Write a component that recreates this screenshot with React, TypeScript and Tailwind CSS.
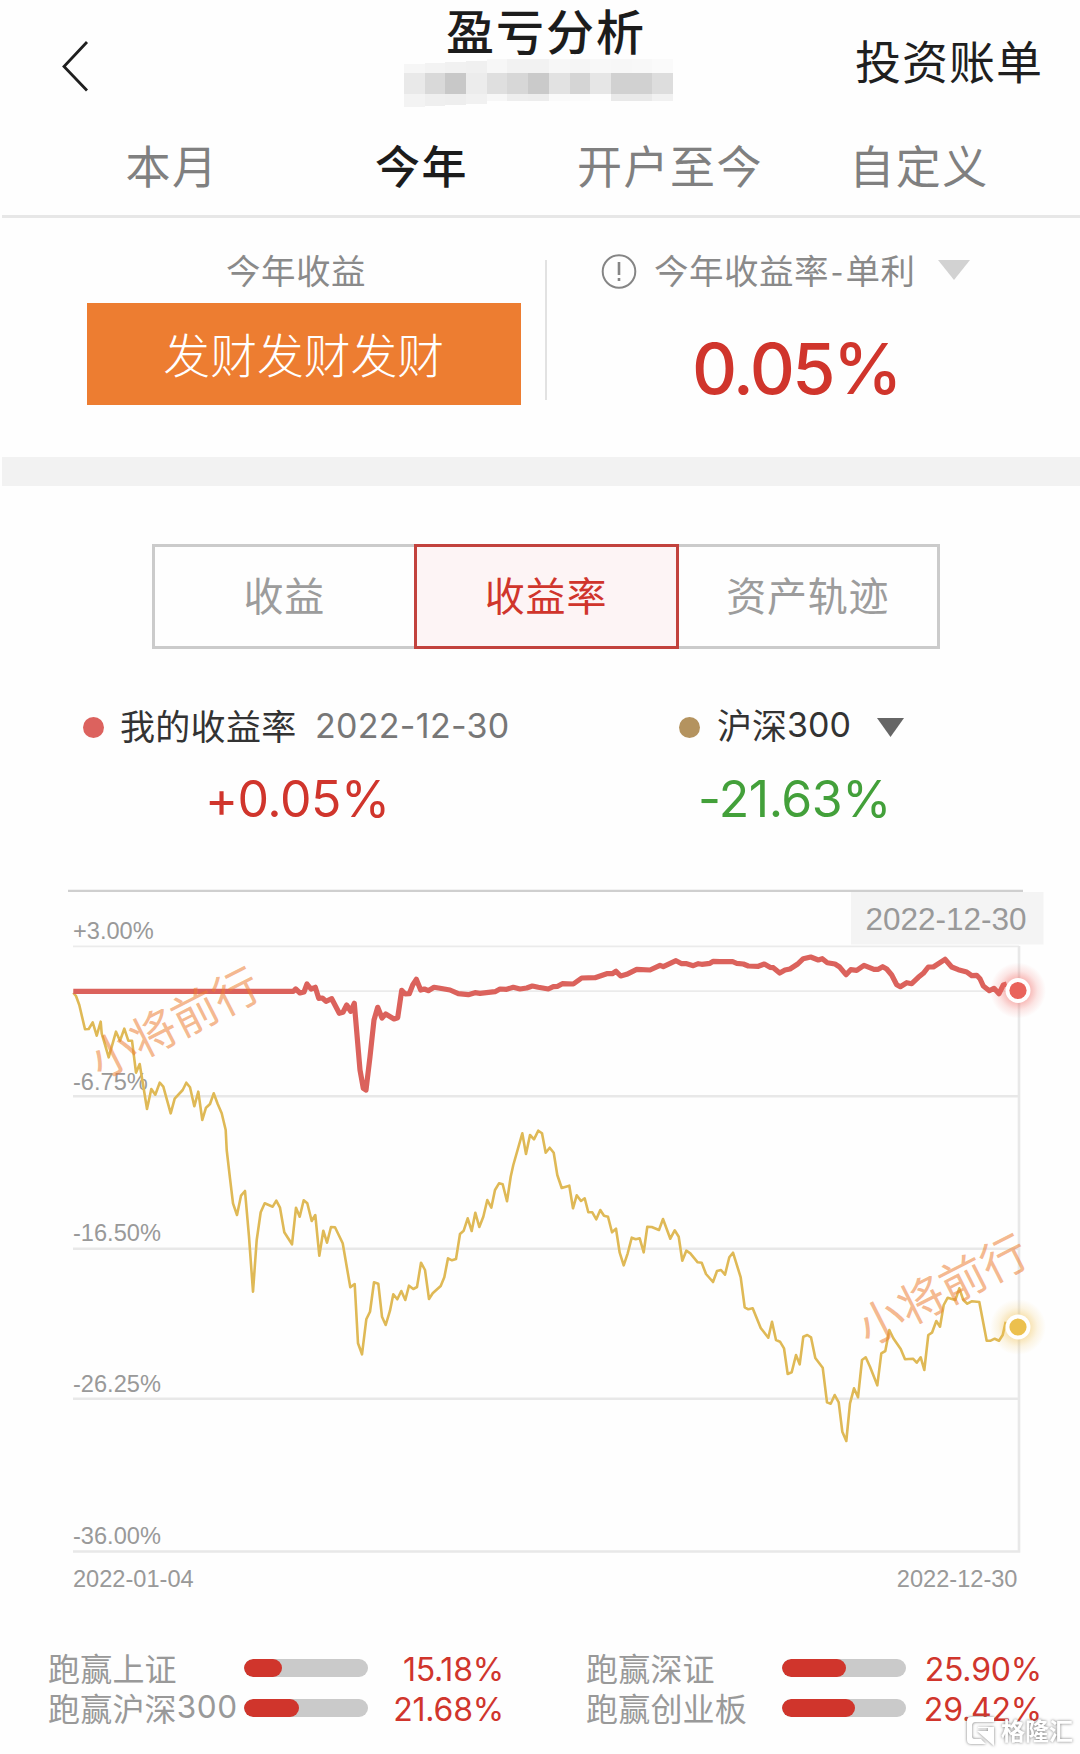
import React from "react";

type Segment = { ox: number; oy: number; pts: string };

// Each segment holds points in thirds of a pixel, relative to its own origin.
const toPoints = (segments: Segment[]) =>
  segments
    .flatMap(({ ox, oy, pts }) =>
      pts.split(" ").map((p) => {
        const [x, y] = p.split(",").map(Number);
        return `${(ox + x / 3).toFixed(1)},${(oy + y / 3).toFixed(1)}`;
      })
    )
    .join(" ");

const indexLine: Segment[] = [
  { ox: 50, oy: 870, pts: "70,368 78,378 88,405 105,478 116,477 128,457 140,497 152,455 155,490 176,562 198,485 210,512 223,476 235,512 246,512 258,608 269,582 291,717 304,657 316,674 329,638 340,650 362,730 374,686 398,660 409,638 420,652 433,709 445,665 457,750 468,713 480,702 491,670 503,702 515,730 527,780" },
  { ox: 50, oy: 1150, pts: "530,0 540,85 549,160 561,195 573,137 585,123 597,260 609,425 620,270 632,187 644,160 668,170 679,152 690,173 703,247 726,283 738,173 749,200 761,151 772,160 785,213 796,195 808,317 820,242 831,278 843,231 855,232 878,280 901,412 914,402 924,580 936,613 949,508 960,485 972,397 985,401 996,500" },
  { ox: 380, oy: 1150, pts: "17,525 30,482 40,433 52,448 64,423 76,450 87,407 100,417 111,411 123,338 135,360 147,447 158,430 182,408 193,382 204,325 216,331 228,327 240,252 251,242 263,205 275,243 286,188 298,231 310,200 322,150 334,173 345,120 357,100 368,103 381,154 392,80" },
  { ox: 380, oy: 870, pts: "400,885 427,790 438,852 450,795 462,808 475,782 486,790 497,848 509,833 521,848" },
  { ox: 380, oy: 1150, pts: "532,75 545,114 568,107 579,175 590,136 603,153 614,145 625,187 637,187 649,208 661,180 672,197 684,200 696,247 708,236 719,308 731,346 743,310 755,263 767,268 779,265 791,307 802,230 815,231 837,240 849,207 871,266 884,241 896,260 907,332 919,302 931,310 953,337 965,338 978,372 999,396 1011,363 1023,360 1035,374 1048,322" },
  { ox: 720, oy: 1150, pts: "39,308 62,382 74,472 85,478 98,475 122,534 145,563 156,515 168,570 180,575 192,595 203,672 215,667 228,615 239,643 250,560 262,555 273,562 286,624 308,653 321,757 332,761 344,735 356,757 367,845 379,873 390,760 402,715 414,742 426,630 437,622 450,650 472,706 484,610 496,603 508,540 520,565 542,597 555,628 579,626 590,638 602,622 613,660 625,555 636,548 649,513 660,530 671,465 683,443 706,450 718,415 730,450 742,461 755,454 778,456 800,572 812,572 824,566 837,572 848,555 857,515" },
];

const mineLine: Segment[] = [
  { ox: 50, oy: 870, pts: "70,364 730,364 737,357 750,369 762,366 771,342 783,357 796,352 806,385 817,384 828,394 845,386 868,430 879,427 890,405 902,424 913,400 930,600 940,655 948,660 960,560 972,450 983,412 996,444 1007,432 1032,447 1043,443" },
  { ox: 380, oy: 870, pts: "65,361 76,372 88,371 98,345 109,328 122,360 133,357 145,362 162,352 180,355 210,360 235,371 265,374 285,368 300,370 345,365 360,357 380,358 400,352 420,357 440,354 457,348 475,352 505,357 520,350 533,349 547,341 580,342 605,324 645,323 680,311 697,311 708,304 722,318 740,313 770,298 810,300 840,286 850,290 888,272 905,281 920,281 940,287 955,281 965,283 990,280 1000,274" },
  { ox: 720, oy: 870, pts: "0,275 38,275 50,280 70,282 85,288 115,289 133,282 150,292 160,293 179,309 195,300 210,297 232,283 250,266 272,261 295,270 307,266 322,278 345,282 358,290 378,314 392,299 410,301 432,286 462,298 475,298 488,290 500,297 515,315 530,344 541,350 560,338 575,341 595,322 610,310 625,291 640,291 675,268 695,291 715,299 740,306 755,317 770,316 780,326 790,348 808,362 822,355 837,371 850,345 860,342" },
];

const mosaic = ["#e9e9e9", "#d9d9d9", "#c8c8c8", "#ececec", "#dfdfdf", "#d7d7d7", "#cacaca", "#e2e2e2", "#d5d5d5", "#e6e6e6", "#d1d1d1", "#d1d1d1", "#dddddd"];
const mosaicTop = ["#f6f6f6", "#f3f3f3", "#f1f1f1", "#f0f0f0", "#f7f7f7", "#f2f2f2", "#f2f2f2", "#f7f7f7", "#f5f5f5", "#f8f8f8", "#f7f7f7", "#f8f8f8", "#fafafa"];
const mosaicBottom = ["#f3f3f3", "#efefef", "#eeeeee", "#f1f1f1", "#f7f7f7", "#eeeeee", "#ededed", "#fafafa", "#fbfbfb", "#fdfdfd", "#e9e9e9", "#e9e9e9", "#f1f1f1"];

function Header() {
  return (
    <header className="flex h-[110px] items-start">
      <svg className="mt-[38px] ml-[58px] h-[56px] w-[34px]" viewBox="0 0 34 56" fill="none" stroke="#1f1f1f" strokeWidth="2.8">
        <path d="M29 4 6 28.500 29 52.500" />
      </svg>
      <div className="ml-[312px] flex w-[269px] flex-col">
        <h1 className="ml-[42px] text-[48px] leading-[58px] font-medium tracking-[2px] whitespace-nowrap text-[#1c1c1c]">盈亏分析</h1>
        <div className="mt-[1px] flex items-end">
          {mosaicTop.map((c, i) => <i key={i} className="w-[20.700px]" style={{ background: c, height: i < 4 ? 9 + i : 14 }} />)}
        </div>
        <div className="flex">
          {mosaic.map((c, i) => <i key={i} className="h-[21px] w-[20.700px]" style={{ background: c }} />)}
        </div>
        <div className="flex items-start">
          {mosaicBottom.map((c, i) => <i key={i} className="w-[20.700px]" style={{ background: c, height: i < 4 ? 13 - i : 7 }} />)}
        </div>
      </div>
      <span className="mt-[35px] ml-[182px] text-[46px] leading-[48px] tracking-[1px] whitespace-nowrap text-[#1f1f1f]">投资账单</span>
    </header>
  );
}

function Tabs() {
  return (
    <nav className="ml-[2px] flex h-[108px] border-b-[3px] border-[#e7e7e7] pt-[30px] pl-[44px] text-center text-[45px] leading-[50px] tracking-[1.500px] whitespace-nowrap text-[#808080]">
      <span className="w-[252px]">本月</span>
      <span className="w-[247px] font-medium text-[#1c1c1c]">今年</span>
      <span className="w-[250px]">开户至今</span>
      <span className="w-[248px]">自定义</span>
    </nav>
  );
}

function Summary() {
  return (
    <section className="flex h-[239px]">
      <div className="w-[545px]">
        <p className="mt-[31px] ml-[226px] text-[34.500px] leading-[40px] tracking-[0.500px] text-[#8a8a8a]">今年收益</p>
        <div className="mt-[14px] ml-[87px] flex h-[102px] w-[433.500px] items-center justify-center bg-[#ed7d31] pb-[3px] text-[46.800px] leading-[50px] font-light text-white">发财发财发财</div>
      </div>
      <div className="mt-[42px] h-[140px] w-[2px] bg-[#e2e2e2]" />
      <div className="pl-[54px]">
        <div className="mt-[33px] flex h-[40px] items-center">
          <svg className="h-[38px] w-[36px]" viewBox="0 0 36 38" fill="none" stroke="#858585">
            <circle cx="18" cy="19.500" r="16.300" strokeWidth="2" />
            <path d="M18 10v13M18 26v3" strokeWidth="2.600" />
          </svg>
          <span className="mb-[4px] ml-[17px] w-[263px] text-[34.500px] leading-[40px] tracking-[0.500px] whitespace-nowrap text-[#8a8a8a]">今年收益率<b className="px-[2px] font-normal">-</b>单利</span>
          <svg className="mb-[3px] ml-[21px] h-[20px] w-[32px]" viewBox="0 0 32 20"><path d="M0 0h32L16 20z" fill="#d2d2d2" /></svg>
        </div>
        <p className="mt-[38px] ml-[91px] font-[Inter] text-[70px] leading-[80px] font-medium tracking-[-2.500px] text-[#d0352c]">0.05%</p>
      </div>
    </section>
  );
}

function Segments() {
  return (
    <div className="mt-[58px] ml-[152px] flex h-[105px] w-[788px] text-[40px] leading-[95px] tracking-[0.800px] text-[#9c9c9c]">
      <span className="w-[261.500px] border-[3px] border-r-0 border-[#cbcbcb] text-center">收益</span>
      <span className="w-[265px] border-[3px] border-[#c2423d] bg-[#fdf4f5] text-center text-[#d0352c]">收益率</span>
      <span className="w-[261.500px] border-[3px] border-l-0 border-[#cbcbcb] text-center">资产轨迹</span>
    </div>
  );
}

function Legend() {
  return (
    <section className="mt-[58px] h-[181px]">
      <div className="flex h-[40px] items-center whitespace-nowrap">
        <i className="ml-[83px] size-[21px] rounded-full bg-[#dc625e]" />
        <span className="mb-[5px] ml-[16px] w-[195px] text-[35px] leading-[40px] tracking-[0.300px] text-[#333]">我的收益率</span>
        <span className="mb-[3px] w-[363px] font-[Inter] text-[34px] leading-[40px] tracking-[0.300px] text-[#777]">2022-12-30</span>
        <i className="ml-[1px] size-[21px] rounded-full bg-[#b4935f]" />
        <span className="mb-[5px] ml-[17px] flex w-[160px] text-[35px] leading-[40px] text-[#333]">沪深<b className="mt-px font-[Inter] text-[34px] font-normal">300</b></span>
        <svg className="h-[19px] w-[27px]" viewBox="0 0 27 19"><path d="M0 0h27L13.500 19z" fill="#666" /></svg>
      </div>
      <div className="mt-[22px] flex font-[Inter] text-[50px] leading-[60px] tracking-[-0.500px]">
        <span className="ml-[205px] w-[493px] text-[#d0352c]">+0.05%</span>
        <span className="text-[#43a03a]">-21.63%</span>
      </div>
    </section>
  );
}

const gridLabels: [string, number][] = [["+3.00%", 938.500], ["-6.75%", 1089.500], ["-16.50%", 1241], ["-26.25%", 1392], ["-36.00%", 1543.500]];

function Chart() {
  return (
    <section className="relative">
      <svg className="block h-[740px] w-[1080px]" viewBox="0 888 1080 740" fontFamily="Liberation Sans, Arial, sans-serif">
        <defs>
          <radialGradient id="redGlow"><stop offset="0.4" stopColor="#f0605a" stopOpacity="0.45" /><stop offset="0.7" stopColor="#f0605a" stopOpacity="0.16" /><stop offset="1" stopColor="#f0605a" stopOpacity="0" /></radialGradient>
          <radialGradient id="goldGlow"><stop offset="0.4" stopColor="#f0c050" stopOpacity="0.45" /><stop offset="0.7" stopColor="#f0c050" stopOpacity="0.16" /><stop offset="1" stopColor="#f0c050" stopOpacity="0" /></radialGradient>
        </defs>
        <path d="M68 890.800H1023" stroke="#cfcfcf" strokeWidth="2.200" />
        <path d="M73 946.300H1019M73 991.200H1019" stroke="#ebebeb" strokeWidth="1.800" />
        <path d="M73 1096.200H1019M73 1248.800H1019M73 1398.800H1019M73 1551.500H1019V946" stroke="#e8e8e8" strokeWidth="2.600" fill="none" />
        <g fontSize="23.600" fill="#999">
          {gridLabels.map(([t, y]) => <text key={t} x="73" y={y}>{t}</text>)}
          <text x="73" y="1587">2022-01-04</text>
          <text x="1017.500" y="1587" textAnchor="end">2022-12-30</text>
        </g>
        <polyline points={toPoints(indexLine)} fill="none" stroke="#dfb956" strokeWidth="2.600" strokeLinejoin="round" />
        <polyline points={toPoints(mineLine)} fill="none" stroke="#db625c" strokeWidth="5.200" strokeLinejoin="round" />
        <circle cx="1018" cy="990.500" r="28" fill="url(#redGlow)" />
        <circle cx="1018" cy="990.500" r="12.500" fill="#fff" />
        <circle cx="1018" cy="990.500" r="8.600" fill="#e9635b" />
        <circle cx="1018" cy="1327" r="28" fill="url(#goldGlow)" />
        <circle cx="1018" cy="1327" r="12.500" fill="#fff" />
        <circle cx="1018" cy="1327" r="8.600" fill="#ecc04e" />
        <rect x="851" y="892" width="192.500" height="52.500" fill="#f4f4f4" />
        <text x="865.500" y="929.500" fontSize="31.500" fill="#999">2022-12-30</text>
      </svg>
      <span className="absolute top-[102px] left-[73px] w-[200px] -rotate-[27deg] text-center text-[46px] leading-[60px] whitespace-nowrap text-[#ed7d31]/55">小将前行</span>
      <span className="absolute top-[369px] left-[841px] w-[200px] -rotate-[27deg] text-center text-[46px] leading-[60px] whitespace-nowrap text-[#ed7d31]/55">小将前行</span>
    </section>
  );
}

function Row({ label, suffix, fill, pct }: { label: string; suffix?: string; fill: number; pct: string }) {
  return (
    <div className="flex h-[40px] items-center whitespace-nowrap">
      <span className="mb-[2px] flex w-[196px] text-[32px] leading-[40px] tracking-[0.200px] text-[#999]">{label}{suffix && <b className="font-[Inter] text-[31.500px] font-normal tracking-[0.500px]">{suffix}</b>}</span>
      <div className="h-[18px] w-[124px] overflow-hidden rounded-full bg-[#cacaca]">
        <div className="h-full rounded-full bg-[#d0352c]" style={{ width: fill }} />
      </div>
      <span className="mt-[3px] w-[136px] text-right font-[Inter] text-[32px] leading-[40px] tracking-[-0.200px] text-[#d0352c]">{pct}</span>
    </div>
  );
}

export default function App() {
  return (
    <main className="relative h-[1754px] w-[1080px] overflow-hidden bg-[#fefefe] font-['Noto_Sans_CJK_SC',sans-serif]">
      <Header />
      <Tabs />
      <Summary />
      <div className="ml-[2px] h-[29px] bg-[#f2f2f2]" />
      <Segments />
      <Legend />
      <Chart />
      <section className="mt-[20px] flex">
        <div className="ml-[48px] w-[538px]">
          <Row label="跑赢上证" fill={38} pct="15.18%" />
          <Row label="跑赢沪深" suffix="300" fill={55} pct="21.68%" />
        </div>
        <div>
          <Row label="跑赢深证" fill={64} pct="25.90%" />
          <Row label="跑赢创业板" fill={73} pct="29.42%" />
        </div>
      </section>
      <div className="absolute top-[1713px] left-[965px] flex items-center text-white drop-shadow-[0_0_1.500px_#777]">
        <svg className="h-[34px] w-[34px]" viewBox="0 0 34 34" fill="#fff">
          <path d="M6 2H29V7H11Q7 7 7 11V21Q7 24 10 24H16L21 29H6Q2 29 2 25V6Q2 2 6 2ZM13 12H29V31L12 16H23V13H13Z" />
        </svg>
        <span className="mb-[4px] ml-[2px] text-[24px] leading-[34px] font-bold">格隆汇</span>
      </div>
    </main>
  );
}
